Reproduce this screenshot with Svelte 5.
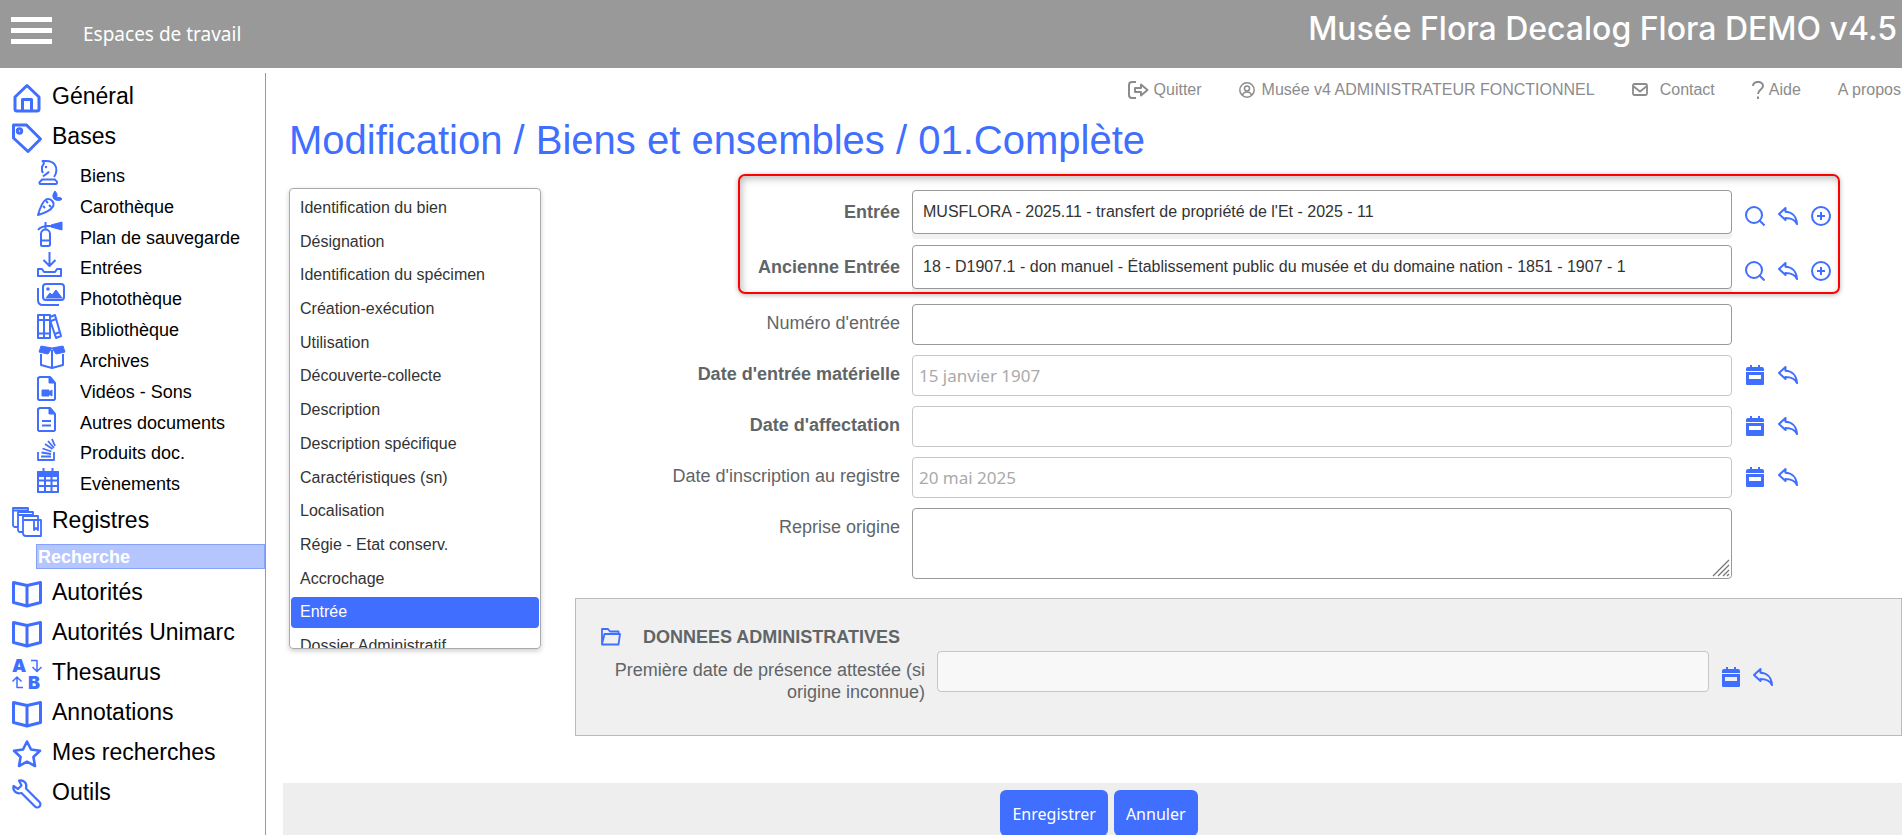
<script>
  const icons = {
    home: '<path d="M3 14v12a2 2 0 0 0 2 2h20a2 2 0 0 0 2-2V14L15 2.500z"/><path d="M10.500 28V16.500h9V28"/>',
    tag: '<path d="M1.500 2h13L28.500 16 16 28.500 1.500 15z"/><circle cx="7.500" cy="8" r="2.200"/>',
    registers: '<g stroke-width="1.800"><path d="M6 20H3a2 2 0 0 1-2-2V1h15v4M1 3.500h15"/><path d="M11 25H8a2 2 0 0 1-2-2V5h15v4M6 8h15"/><path d="M11 9h15v4M11 9v17a3 3 0 0 0 3 3h15V13H12M22 13v10l2-2 2 2V13"/></g>',
    book: '<path d="M1.500 3.500 15 6.500l13.500-3v20L15 27 1.500 23.500zM15 6.500V27"/>',
    thesaurus: '<g fill="currentColor" stroke="none" font-family="Inter, sans-serif" font-weight="900" font-size="18"><text x="0" y="13">A</text><text x="16" y="30">B</text></g><g stroke-width="1.500"><path d="M19 1.500h6V12M20.500 8l4.500 4.500L29.500 8M11 28.500H5V18M.500 22.500 5 18l4.500 4.500"/></g>',
    star: '<path d="m15 2.500 4 8 9 1.300-6.600 6.200 1.600 9-8-4.300L7 27l1.600-9L2 11.800l9-1.300z" stroke-width="2.600"/>',
    wrench: '<path d="M7 1.500c5-1 8.500 3 7 8l13.500 13.500a3 3 0 0 1-4.500 4.500L9.500 14C4.500 15.500.500 12 1.500 7l4.500 3 3.500-3.500z" stroke-width="2.200"/>',
    knight: '<path d="M17 17c3-4 3-9 1-12-2-3.500-6-4-9-4H5.500L7 3 5 7v4l1 2M12 11.500c-1 2-4 3-6 5"/><circle cx="9" cy="7" r=".5" stroke-width="1.500"/><path d="M5 19.500h13c0 1 2 1.500 2 2.500s0 2-1 2H3c-2-2 1-2.500 2-4.500z"/>',
    carrot: '<path d="M1 24c2-7 4-13 8-15.500 4-2 9 2.500 7 7C14 19 8 22 1 24zM9 10l2 2m3 4-2-2M6 15l2 2"/><path d="M17 8c-2-3-1-5 1-8 2 2 3 5 1 7 2-1 5-1 6 1-2 2-5 2-8 0z" fill="currentColor" stroke-width="1"/>',
    extinguisher: '<path d="M4 23V12c0-6 9-6 9 0v11q-.5 1-2 1H6q-2 0-2-1zM4 18.500h9M8.500 7V0M1 8c2-3 6-4.500 13-4"/><path d="m14 3 11-3v8L14 5z" fill="currentColor" stroke-width="1"/>',
    inbox: '<path d="M12.500 0v13M6.500 8l6 6 6-6M5 17H1v7h23v-7h-4l-2 3H7z"/>',
    photos: '<rect x="6" y="1" width="21" height="16" rx="3"/><circle cx="11" cy="6" r=".8" fill="currentColor"/><path d="m9 15 4-5 2 2 4-5 6 8z" fill="currentColor" stroke-width="1"/><path d="M1 5v12q0 5 5 5h16"/>',
    books: '<path d="M1 1h12v23H1zM7 1v23M1 6h12M1 19.500h12M13 3l5-2 6 21-5 2-6-18M14 7l5-2m-1 15 5-2"/>',
    archive: '<path d="M4 9v11l11 3 11-3V9M15 5v17"/><path d="m4 1 11 2-4 6-9-2zM26 1 15 3l4 6 9-2z" fill="currentColor" stroke-width="1"/>',
    video: '<path d="M3 1h10l5 6v16l-1 1H2l-1-1V2z"/><path d="M12 1v6h6zM5 14h7v6H5zM12 16l3-2v6l-3-2z" fill="currentColor" stroke-width="1"/>',
    file: '<path d="M3 1h10l5 6v16l-1 1H2l-1-1V2zM5 14h9M5 18.500h9"/><path d="M12 1v6h6z" fill="currentColor" stroke-width="1"/>',
    stack: '<g stroke-width="1.800"><path d="M1 15v8h16v-8M4 19.500h10M4.500 15.500l9.500 1.500M5.500 11.500l9 3M8 7l7.500 5M11 4l6 7M15 2l3 7"/></g>',
    calendarGrid: '<path d="M1 4h20v20H1zM1 12.500h20M1 18h20M8 8v16M14.500 8v16M6.500 0v4M15.500 0v4"/><path d="M1 4h20v4H1z" fill="currentColor"/>',
  };

  const bases = [
    ['knight', 'Biens'],
    ['carrot', 'Carothèque'],
    ['extinguisher', 'Plan de sauvegarde'],
    ['inbox', 'Entrées'],
    ['photos', 'Photothèque'],
    ['books', 'Bibliothèque'],
    ['archive', 'Archives'],
    ['video', 'Vidéos - Sons'],
    ['file', 'Autres documents'],
    ['stack', 'Produits doc.'],
    ['calendarGrid', 'Evènements'],
  ];

  const tools = [
    ['book', 'Autorités'],
    ['book', 'Autorités Unimarc'],
    ['thesaurus', 'Thesaurus'],
    ['book', 'Annotations'],
    ['star', 'Mes recherches'],
    ['wrench', 'Outils'],
  ];

  const sections = [
    'Identification du bien',
    'Désignation',
    'Identification du spécimen',
    'Création-exécution',
    'Utilisation',
    'Découverte-collecte',
    'Description',
    'Description spécifique',
    'Caractéristiques (sn)',
    'Localisation',
    'Régie - Etat conserv.',
    'Accrochage',
    'Entrée',
    'Dossier Administratif',
  ];

  let current = $state('Entrée');

  let entries = $state([
    { id: 'entree', label: 'Entrée', value: "MUSFLORA - 2025.11 - transfert de propriété de l'Et - 2025 - 11" },
    { id: 'ancienne', label: 'Ancienne Entrée', value: '18 - D1907.1 - don manuel - Établissement public du musée et du domaine nation - 1851 - 1907 - 1' },
  ]);

  let numero = $state('');
  let reprise = $state('');

  let dates = $state([
    { id: 'materielle', label: "Date d'entrée matérielle", value: '15 janvier 1907', bold: true },
    { id: 'affectation', label: "Date d'affectation", value: '', bold: true },
    { id: 'inscription', label: "Date d'inscription au registre", value: '20 mai 2025', bold: false },
  ]);
</script>

{#snippet menuLink(name, text)}
  <a class="menu-link" href="#menu">
    <svg width="30" height="30" viewBox="0 0 30 30" fill="none" stroke="currentColor" stroke-width="3" stroke-linejoin="round">
      {@html icons[name]}
    </svg>
    <span>{text}</span>
  </a>
{/snippet}

{#snippet undo()}
  <button type="button" class="icon-button" aria-label="Rétablir">
    <svg width="20" height="20" viewBox="0 0 20 20" fill="none" stroke="currentColor" stroke-width="2" stroke-linejoin="round">
      <path d="M1 8 7.500 2v3.800c6 .2 11 4.200 11.500 12.200-1.800-3.800-5.500-6-11.500-6V14z" />
    </svg>
  </button>
{/snippet}

{#snippet calendar()}
  <button type="button" class="icon-button" aria-label="Calendrier">
    <svg width="20" height="20" viewBox="0 0 20 20" fill="currentColor">
      <path d="M5 0h2v2h6V0h2v2h2q2 0 2 2v2H1V4q0-2 2-2h2z" />
      <path fill-rule="evenodd" d="M1 7h18v12q0 1-1 1H2q-1 0-1-1zm3 3v4h12v-4z" />
    </svg>
  </button>
{/snippet}

<div class="app">
  <header>
    <button type="button" class="burger" aria-label="Menu">
      <span></span><span></span><span></span>
    </button>
    <a class="workspaces" href="#espaces">Espaces de travail</a>
    <div class="brand">Musée Flora Decalog Flora DEMO v4.5</div>
  </header>

  <div class="body">
    <nav class="sidebar">
      {@render menuLink('home', 'Général')}
      {@render menuLink('tag', 'Bases')}
      <ul class="bases">
        {#each bases as [name, text]}
          <li>
            <a href="#base">
              <svg width="31" height="25" viewBox="0 0 31 25" fill="none" stroke="currentColor" stroke-width="2" stroke-linejoin="round">
                {@html icons[name]}
              </svg>
              <span>{text}</span>
            </a>
          </li>
        {/each}
      </ul>
      {@render menuLink('registers', 'Registres')}
      <a class="active-search" href="#recherche">Recherche</a>
      {#each tools as [name, text]}
        {@render menuLink(name, text)}
      {/each}
    </nav>

    <main>
      <nav class="topnav">
        <a class="tight" href="#quitter">
          <svg width="21" height="18" viewBox="0 0 21 18" fill="none" stroke="currentColor" stroke-width="2" stroke-linejoin="round">
            <path d="M8 1H4Q1 1 1 4v10q0 3 3 3h4" />
            <path d="M7 7h6V3.500L19.500 9 13 14.500V11H7z" />
          </svg>
          Quitter
        </a>
        <a href="#compte">
          <svg width="16" height="16" viewBox="0 0 16 16" fill="none" stroke="currentColor" stroke-width="1.500">
            <circle cx="8" cy="8" r="7.200" />
            <circle cx="8" cy="6.500" r="2.500" />
            <path d="M3.500 13q1-3 4.500-3t4.500 3" />
          </svg>
          Musée v4 ADMINISTRATEUR FONCTIONNEL
        </a>
        <a class="wide" href="#contact">
          <svg width="16" height="13" viewBox="0 0 16 13" fill="none" stroke="currentColor" stroke-width="1.800">
            <rect x="1" y="1" width="14" height="11" rx="1.500" />
            <path d="m1 3 7 5.500L15 3" />
          </svg>
          Contact
        </a>
        <a class="tight" href="#aide">
          <svg width="12" height="18" viewBox="0 0 12 18" fill="none" stroke="currentColor" stroke-width="2">
            <path d="M1 5c0-5.500 10-5.500 10 0 0 3.500-5 3.500-5 8M6 15.500v2.500" />
          </svg>
          Aide
        </a>
        <a href="#apropos">A propos</a>
      </nav>

      <h1>Modification / Biens et ensembles / 01.Complète</h1>

      <div class="content">
        <div class="panel">
          <div class="panel-list">
            {#each sections as section}
              <button
                type="button"
                class:selected={section === current}
                onclick={() => (current = section)}
              >{section}</button>
            {/each}
          </div>
        </div>

        <form onsubmit={(e) => e.preventDefault()}>
          <div class="highlight">
            {#each entries as entry}
              <div class="row tall">
                <label class="bold" for={entry.id}>{entry.label}</label>
                <input id={entry.id} type="text" bind:value={entry.value} />
                <div class="actions">
                  <button type="button" class="icon-button" aria-label="Rechercher">
                    <svg width="20" height="20" viewBox="0 0 20 20" fill="none" stroke="currentColor" stroke-width="2">
                      <circle cx="9" cy="9" r="8" />
                      <path d="m14 14 5.500 5.500" />
                    </svg>
                  </button>
                  {@render undo()}
                  <button type="button" class="icon-button" aria-label="Ajouter">
                    <svg width="20" height="20" viewBox="0 0 20 20" fill="none" stroke="currentColor" stroke-width="2">
                      <circle cx="10" cy="10" r="9" />
                      <path d="M10 6v8M6 10h8" />
                    </svg>
                  </button>
                </div>
              </div>
            {/each}
          </div>

          <div class="row">
            <label for="numero">Numéro d'entrée</label>
            <input id="numero" type="text" bind:value={numero} />
          </div>

          {#each dates as date}
            <div class="row">
              <label class:bold={date.bold} for={date.id}>{date.label}</label>
              <input id={date.id} class="date" type="text" value={date.value} readonly />
              <div class="actions">
                {@render calendar()}
                {@render undo()}
              </div>
            </div>
          {/each}

          <div class="row">
            <label for="reprise">Reprise origine</label>
            <div class="area">
              <textarea id="reprise" bind:value={reprise}></textarea>
              <svg width="18" height="18" viewBox="0 0 18 18" stroke="#777" stroke-width="1.300">
                <path d="M1 17 17 1M6 17 17 6M11 17l6-6M15 17l2-2" />
              </svg>
            </div>
          </div>

          <section>
            <h2>
              <svg width="20" height="18" viewBox="0 0 20 18" fill="none" stroke="currentColor" stroke-width="1.800" stroke-linejoin="round">
                <path d="M1 16V1h6l2 2.500h8.500V6M1 16 3.500 6H19l-1.500 10.500H1z" />
              </svg>
              DONNEES ADMINISTRATIVES
            </h2>
            <div class="row">
              <label for="presence">Première date de présence attestée (si origine inconnue)</label>
              <input id="presence" class="date" type="text" readonly />
              <div class="actions">
                {@render calendar()}
                {@render undo()}
              </div>
            </div>
          </section>
        </form>
      </div>

      <footer>
        <button type="button">Enregistrer</button>
        <button type="button">Annuler</button>
      </footer>
    </main>
  </div>
</div>

<style>
  :global(body) {
    background: #fff;
    overflow: hidden;
  }

  .app {
    --blue: #406eff;
    display: flex;
    flex-direction: column;
    height: 100vh;
    font-family: "Liberation Sans", Arial, sans-serif;
    font-size: 16px;
  }

  .app :global(*) {
    box-sizing: border-box;
  }

  a {
    color: inherit;
    text-decoration: none;
  }

  button,
  input,
  textarea {
    font-family: inherit;
  }

  button {
    border: none;
    cursor: pointer;
  }

  svg {
    display: block;
    flex-shrink: 0;
  }

  header {
    display: flex;
    align-items: center;
    flex-shrink: 0;
    height: 68px;
    padding: 0 5px 7px 11px;
    background: #999;
    color: #fff;
  }

  .burger {
    display: flex;
    flex-direction: column;
    gap: 6px;
    width: 41px;
    padding: 0;
    background: none;
  }

  .burger span {
    height: 5px;
    background: #fff;
  }

  .workspaces {
    margin-left: 31px;
    padding-top: 6px;
    font-family: "Noto Sans", sans-serif;
    font-size: 19px;
  }

  .brand {
    margin-left: auto;
    padding-bottom: 4px;
    font-family: Inter, sans-serif;
    font-size: 32px;
    font-weight: 500;
    white-space: nowrap;
  }

  .body {
    display: flex;
    flex: 1;
    min-height: 0;
  }

  .sidebar {
    flex: 0 0 266px;
    margin-top: 5px;
    padding-top: 5px;
    border-right: 1px solid #999;
    color: #000;
  }

  .sidebar svg {
    color: var(--blue);
    overflow: visible;
  }

  .menu-link {
    display: flex;
    align-items: center;
    gap: 10px;
    height: 40px;
    padding-left: 12px;
    font-size: 23px;
  }

  .menu-link span {
    padding-bottom: 4px;
  }

  .bases {
    display: grid;
    grid-auto-rows: 1fr;
    height: 339px;
    margin: 0 0 5px;
    padding: 0 0 0 37px;
    list-style: none;
    font-size: 18px;
    line-height: 22px;
  }

  .bases a {
    display: flex;
    align-items: flex-start;
    gap: 12px;
    padding-top: 2px;
  }

  .bases span {
    padding-top: 5px;
  }

  .active-search {
    display: block;
    height: 25px;
    margin: 2px 0 5px 36px;
    padding-left: 1px;
    border: 1px solid #86a2fb;
    background: #b5c6ff;
    color: #fff;
    font-size: 18px;
    font-weight: 700;
    line-height: 24px;
  }

  main {
    display: flex;
    flex-direction: column;
    flex: 1;
    min-width: 0;
    padding-left: 17px;
  }

  .topnav {
    display: flex;
    align-items: center;
    justify-content: flex-end;
    gap: 37px;
    height: 43px;
    padding-right: 1px;
    color: #8c8c8c;
    white-space: nowrap;
  }

  .topnav a {
    display: flex;
    align-items: center;
    gap: 7px;
  }

  .topnav .tight {
    gap: 5px;
  }

  .topnav .wide {
    gap: 12px;
  }

  h1 {
    margin: 5px 0 24px 6px;
    color: var(--blue);
    font-size: 40px;
    font-weight: 400;
    line-height: 48px;
  }

  .content {
    display: flex;
    align-items: flex-start;
    gap: 34px;
    padding-left: 6px;
  }

  .panel {
    flex: 0 0 252px;
    height: 461px;
    padding: 3px 1px;
    overflow: hidden;
    border: 1px solid #aaa;
    border-radius: 4px;
    box-shadow: 0 2px 5px rgba(0, 0, 0, 0.2);
  }

  .panel-list {
    display: grid;
    grid-auto-rows: 1fr;
    height: 472px;
  }

  .panel button {
    margin: 0 0 2px;
    padding: 0 9px;
    border-radius: 4px;
    background: none;
    color: #333;
    font-size: 16px;
    text-align: left;
  }

  .panel button.selected {
    background: var(--blue);
    color: #fff;
  }

  form {
    display: flex;
    flex-direction: column;
    flex: 1;
    gap: 10px;
    min-width: 0;
    padding-top: 2px;
  }

  .row {
    display: grid;
    grid-template-columns: 325px minmax(0, 1fr) 170px;
    align-items: start;
  }

  label {
    padding: 8px 0 0;
    color: #5f6568;
    font-size: 18px;
    line-height: 22px;
    text-align: right;
  }

  .bold {
    font-weight: 700;
  }

  input,
  textarea {
    display: block;
    width: 100%;
    border: 1px solid #999;
    border-radius: 4px;
    outline: none;
    background: #fff;
    color: #333;
    font-size: 16px;
  }

  input {
    height: 41px;
    padding: 0 10px;
  }

  .row > input,
  .area {
    margin-left: 12px;
    width: calc(100% - 12px);
  }

  .date {
    padding: 0 6px;
    border-color: #c6c6c6;
    color: #aaa;
    font-family: "Noto Sans", sans-serif;
    font-size: 17px;
  }

  .actions {
    display: flex;
    gap: 13px;
    padding: 10px 0 0 13px;
  }

  .icon-button {
    padding: 0;
    background: none;
    color: var(--blue);
  }

  .highlight {
    position: relative;
    display: flex;
    flex-direction: column;
    gap: 11px;
    margin-bottom: 5px;
  }

  .highlight::after {
    content: "";
    position: absolute;
    inset: -16px 62px -5px 163px;
    border: 2px solid #f00;
    border-radius: 7px;
    box-shadow:
      0 1px 5px rgba(0, 0, 0, 0.3),
      inset 2px 3px 7px rgba(0, 0, 0, 0.25);
    pointer-events: none;
  }

  .tall input {
    height: 44px;
    box-shadow: 0 5px 0 #f2f2f2;
  }

  .tall label {
    padding-top: 11px;
  }

  .tall .actions {
    padding-top: 16px;
  }

  .area {
    position: relative;
  }

  textarea {
    height: 71px;
    resize: none;
  }

  .area svg {
    position: absolute;
    right: 2px;
    bottom: 2px;
    pointer-events: none;
  }

  section {
    height: 138px;
    margin-top: 9px;
    padding: 27px 0 0 25px;
    border: 1px solid #bbb;
    background: #f0f0f0;
  }

  h2 {
    display: flex;
    align-items: center;
    gap: 22px;
    margin: 0;
    color: #5f6568;
    font-size: 18px;
    line-height: 22px;
  }

  h2 svg {
    color: var(--blue);
  }

  section .row {
    grid-template-columns: 324px minmax(0, 1fr) 192px;
    margin-top: 3px;
  }

  section label {
    padding-left: 10px;
  }

  section input {
    background: #f8f8f8;
  }

  section .actions {
    gap: 12px;
    padding: 16px 0 0 12px;
  }

  footer {
    display: flex;
    justify-content: center;
    gap: 6px;
    height: 52px;
    margin-top: auto;
    padding: 7px 0 0 13px;
    background: #eee;
  }

  footer button {
    height: 46px;
    padding: 2px 12px 0;
    border-radius: 6px;
    background: var(--blue);
    color: #fff;
    font-family: "Noto Sans", sans-serif;
    font-size: 16px;
  }
</style>
